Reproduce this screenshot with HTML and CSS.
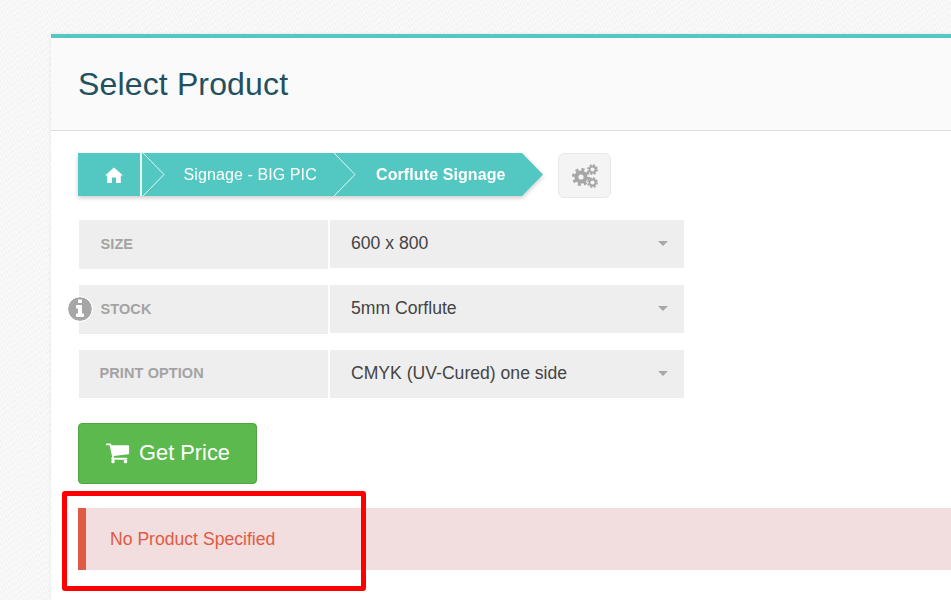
FILE: index.html
```html
<!DOCTYPE html>
<html lang="en">
<head>
  <meta charset="UTF-8" />
  <meta name="viewport" content="width=device-width, initial-scale=1.0" />
  <title>Select Product</title>
  <link rel="stylesheet" href="styles.css">
</head>
<body>
  <div class="panel">
    <div class="panel-head">
      <h1>Select Product</h1>
    </div>
    <div class="panel-body">
      <div class="crumb-row">
        <div class="crumbs">
          <a class="crumb crumb-home">
            <svg class="home-icon" viewBox="0 0 18 16"><path d="M9 0.5 L18 8.5 L15.8 8.5 L15.8 16 L11 16 L11 10.5 L7 10.5 L7 16 L2.2 16 L2.2 8.5 L0 8.5 Z"/></svg>
          </a>
          <a class="crumb crumb-mid">
            <svg class="chevron" viewBox="0 0 24 43"><path d="M1 0 L22 21.5 L1 43"/></svg>
            Signage - BIG PIC
          </a>
          <a class="crumb crumb-last">
            <svg class="chevron" viewBox="0 0 24 43"><path d="M1 0 L22 21.5 L1 43"/></svg>
            Corflute Signage
          </a>
        </div>
        <button class="gear-btn">
          <svg class="gears" viewBox="0 0 26 24">
            <circle class="gear-teeth" cx="9" cy="13" r="7.6" stroke-width="3" stroke-dasharray="3 3"/>
            <circle class="gear-ring" cx="9" cy="13" r="4.6" stroke-width="4"/>
            <circle class="gear-teeth" cx="20.5" cy="5.5" r="4.4" stroke-width="2" stroke-dasharray="2 1.45"/>
            <circle class="gear-ring" cx="20.5" cy="5.5" r="3" stroke-width="1.8"/>
            <circle class="gear-teeth" cx="20.5" cy="18.5" r="4.4" stroke-width="2" stroke-dasharray="2 1.45"/>
            <circle class="gear-ring" cx="20.5" cy="18.5" r="3" stroke-width="1.8"/>
          </svg>
        </button>
      </div>

      <div class="option-row">
        <div class="option-label">SIZE</div>
        <div class="option-value">600 x 800</div>
      </div>
      <div class="option-row">
        <div class="option-label">
          <svg class="info-icon" viewBox="128 128 1536 1536"><path d="M1152 1376v-160q0-14-9-23t-23-9h-96v-512q0-14-9-23t-23-9h-320q-14 0-23 9t-9 23v160q0 14 9 23t23 9h96v320h-96q-14 0-23 9t-9 23v160q0 14 9 23t23 9h448q14 0 23-9t9-23zm-128-896v-160q0-14-9-23t-23-9h-192q-14 0-23 9t-9 23v160q0 14 9 23t23 9h192q14 0 23-9t9-23zm640 416q0 209-103 385.5t-279.5 279.5-385.5 103-385.5-103-279.5-279.5-103-385.5 103-385.5 279.5-279.5 385.5-103 385.5 103 279.5 279.5 103 385.5z"/></svg>
          STOCK
        </div>
        <div class="option-value">5mm Corflute</div>
      </div>
      <div class="option-row option-row-last">
        <div class="option-label">PRINT OPTION</div>
        <div class="option-value">CMYK (UV-Cured) one side</div>
      </div>

      <button class="price-btn">
        <svg class="cart-icon" viewBox="0 0 1792 1792"><path d="M704 1536q0 52-38 90t-90 38-90-38-38-90 38-90 90-38 90 38 38 90zm896 0q0 52-38 90t-90 38-90-38-38-90 38-90 90-38 90 38 38 90zm128-1088v512q0 24-16.5 42.5t-40.5 21.5l-1044 122q13 60 13 70 0 16-24 64h920q26 0 45 19t19 45-19 45-45 19h-1024q-26 0-45-19t-19-45q0-11 8-31.5t16-36 21.5-40 15.5-29.5l-177-823h-204q-26 0-45-19t-19-45 19-45 45-19h256q16 0 28.5 6.5t19.5 15.5 13 24.5 8 26 5.5 29.5 4.5 26h1201q26 0 45 19t19 45z"/></svg>
        Get Price
      </button>

      <div class="alert">
        No Product Specified
        <div class="red-box"></div>
      </div>
    </div>
  </div>
</body>
</html>
```

FILE: styles.css
```css
html, body {
  height: 100%;
  overflow: hidden;
}
body {
  margin: 0;
  padding: 34px 0 0 51px;
  box-sizing: border-box;
  font-family: "Liberation Sans", Arial, sans-serif;
  background-color: #f6f6f6;
  background-image:
    repeating-linear-gradient(60deg, rgba(255,255,255,0.5) 0 1px, transparent 1px 3px),
    repeating-linear-gradient(-35deg, rgba(230,230,230,0.3) 0 1px, transparent 1px 5px);
}
.panel {
  background-color: #fff;
  border-top: 4px solid #53c8c2;
  box-shadow: 0 0 3px rgba(0,0,0,0.08);
  height: 562px;
}
.panel-head {
  background-color: #fafafa;
  border-bottom: 1px solid #dedede;
  height: 92px;
  padding-left: 27px;
  display: flex;
  align-items: center;
}
h1 {
  margin: 0;
  font-size: 32px;
  font-weight: normal;
  letter-spacing: 0.15px;
  color: #23505f;
}
.panel-body {
  padding: 22px 0 0 27px;
}

.crumb-row {
  display: flex;
  align-items: flex-start;
  gap: 15px;
  margin-bottom: 22px;
}
.crumbs {
  display: flex;
  filter: drop-shadow(0 2px 2px rgba(0,0,0,0.2));
}
.crumb {
  position: relative;
  height: 43px;
  display: flex;
  align-items: center;
  box-sizing: border-box;
  background-color: #53c8c2;
  color: #fff;
  font-size: 16px;
  letter-spacing: 0.1px;
}
.crumb-home {
  width: 64px;
  padding-left: 27px;
  border-right: 2px solid #e6f7f6;
}
.crumb-mid {
  width: 191px;
  padding-left: 41.5px;
}
.crumb-last {
  width: 210px;
  padding-left: 43px;
  font-weight: bold;
  clip-path: polygon(0 0, 189px 0, 100% 50%, 189px 100%, 0 100%);
}
.chevron {
  position: absolute;
  left: 0;
  top: 0;
  width: 24px;
  height: 43px;
  fill: none;
  stroke: #e6f7f6;
  stroke-width: 1;
}
.home-icon {
  width: 18px;
  height: 16px;
  fill: #fff;
}
.gear-btn {
  width: 53px;
  height: 45px;
  padding: 0;
  background-color: #f4f4f4;
  border: 1px solid #e8e8e8;
  border-radius: 6px;
  display: flex;
  align-items: center;
  justify-content: center;
}
.gears {
  width: 26px;
  height: 24px;
}
.gear-teeth, .gear-ring {
  fill: none;
  stroke: #a6a6a6;
}

.option-row {
  display: flex;
  gap: 2px;
  margin: 0 0 16px 1px;
  align-items: flex-start;
}
.option-row-last {
  margin-bottom: 25px;
}
.option-label {
  position: relative;
  width: 249px;
  height: 49px;
  box-sizing: border-box;
  padding: 0 0 2px 21.5px;
  display: flex;
  align-items: center;
  background-color: #eeeeee;
  color: #a3a3a3;
  font-size: 14.5px;
  font-weight: bold;
  letter-spacing: 0.1px;
}
.option-value {
  position: relative;
  width: 354px;
  height: 48px;
  box-sizing: border-box;
  padding: 0 0 1px 21px;
  display: flex;
  align-items: center;
  background-color: #eeeeee;
  color: #444;
  font-size: 17.6px;
}
.option-value::after {
  content: "";
  position: absolute;
  right: 16px;
  top: 21px;
  border-left: 5px solid transparent;
  border-right: 5px solid transparent;
  border-top: 5px solid #a8a8a8;
}
.option-row-last .option-label {
  height: 48px;
  padding-left: 20.5px;
}
.info-icon {
  position: absolute;
  left: -11px;
  top: 12px;
  width: 24px;
  height: 24px;
  fill: #a6a6a6;
  background-color: #fff;
  border-radius: 50%;
  outline: 1px solid #fff;
}

.price-btn {
  width: 179px;
  height: 61px;
  padding: 0 0 2px 0;
  display: flex;
  align-items: center;
  justify-content: center;
  gap: 9px;
  background-color: #5cb94d;
  border: 1px solid #4fa544;
  border-radius: 4px;
  color: #fff;
  font-family: inherit;
  font-size: 21.8px;
  margin-bottom: 24px;
}
.cart-icon {
  width: 25px;
  height: 25px;
  fill: #fff;
}

.alert {
  position: relative;
  height: 62px;
  box-sizing: border-box;
  padding-left: 24px;
  display: flex;
  align-items: center;
  background-color: #f2dede;
  border-left: 8px solid #e05a44;
  color: #e05a44;
  font-size: 17.6px;
}
.red-box {
  position: absolute;
  left: -24px;
  top: -17px;
  width: 304px;
  height: 100px;
  box-sizing: border-box;
  border: 5px solid #fe0000;
  border-radius: 3px;
}
```
